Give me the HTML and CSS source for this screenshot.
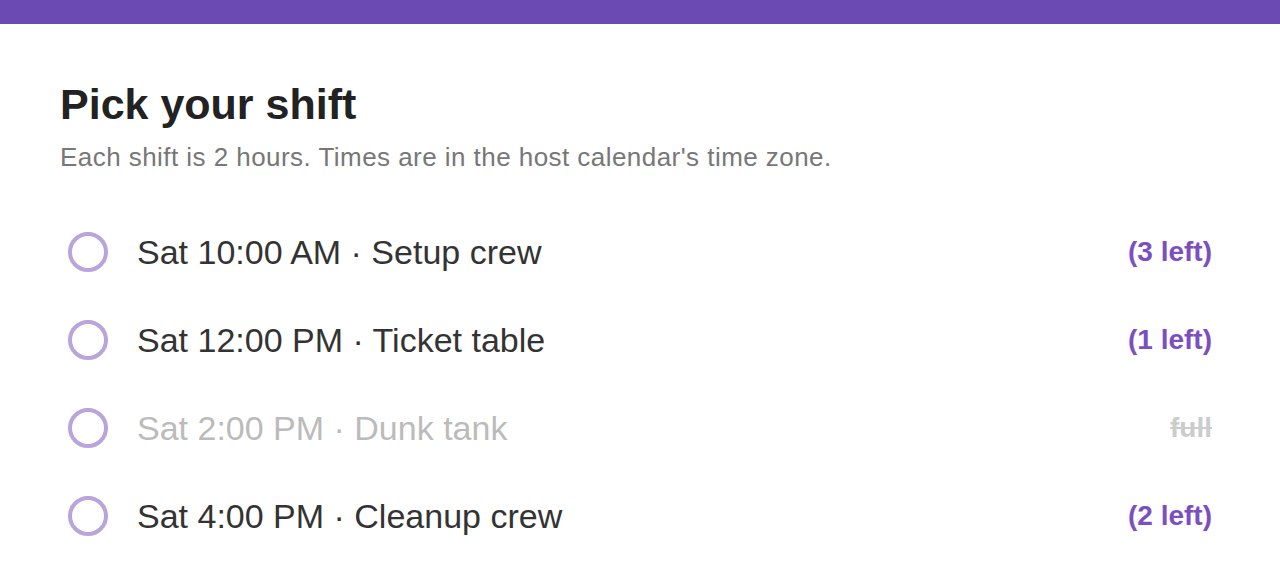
FILE: index.html
```html
<!DOCTYPE html>
<html>
	<head>
		<meta charset="utf-8">
		<meta name="viewport" content="width=device-width, initial-scale=1.0">
		<title>Pick your shift</title>
		<link rel="stylesheet" href="styles.css">
	</head>
	<body>
		<div class="topbar"></div>
		<div class="mainbody">
			<h1 class="title">Pick your shift</h1>
			<p class="subtitle">Each shift is 2 hours. Times are in the host calendar's time zone.</p>

			<div class="shifts">
				<label class="shift">
					<input type="radio" name="shift">
					<span class="radio"></span>
					<span class="name">Sat 10:00 AM · Setup crew</span>
					<span class="left">(3 left)</span>
				</label>
				<label class="shift">
					<input type="radio" name="shift">
					<span class="radio"></span>
					<span class="name">Sat 12:00 PM · Ticket table</span>
					<span class="left">(1 left)</span>
				</label>
				<label class="shift full">
					<input type="radio" name="shift" disabled>
					<span class="radio"></span>
					<span class="name">Sat 2:00 PM · Dunk tank</span>
					<span class="left">full</span>
				</label>
				<label class="shift">
					<input type="radio" name="shift">
					<span class="radio"></span>
					<span class="name">Sat 4:00 PM · Cleanup crew</span>
					<span class="left">(2 left)</span>
				</label>
			</div>
		</div>
	</body>
</html>
```

FILE: styles.css
```css
* {
	/* 清除默认边距 */
	margin: 0;
	padding: 0;
	box-sizing: border-box;
}

body {
	background-color: #fff;
	font-family: "Liberation Sans", Arial, sans-serif;
	color: #333;
}

.topbar {
	height: 24px;
	background-color: #6b4bb3;
}

.mainbody {
	padding: 54px 68px 0 60px;
}

.title {
	font-size: 43px;
	font-weight: 700;
	line-height: 52px;
	color: #222;
}

.subtitle {
	margin-top: 12px;
	font-size: 26px;
	line-height: 30px;
	letter-spacing: 0.45px;
	color: #777;
}

.shifts {
	margin-top: 36px;
	display: flex;
	flex-direction: column;
}

.shift {
	height: 88px;
	display: flex;
	align-items: center;
	cursor: pointer;
}

.shift input {
	/* 隐藏原生单选框 */
	display: none;
}

.radio {
	width: 40px;
	height: 40px;
	margin-left: 8px;
	border: 4px solid #b9a5d9;
	border-radius: 50%;
	flex-shrink: 0;
}

.name {
	margin-left: 29px;
	font-size: 34px;
	flex: 1;
}

.left {
	font-size: 28px;
	font-weight: 700;
	color: #7b4fbf;
}

.shift.full {
	cursor: default;
}

.shift.full .name {
	color: #bbb;
}

.shift.full .left {
	color: #ccc;
	text-decoration: line-through;
}
```
